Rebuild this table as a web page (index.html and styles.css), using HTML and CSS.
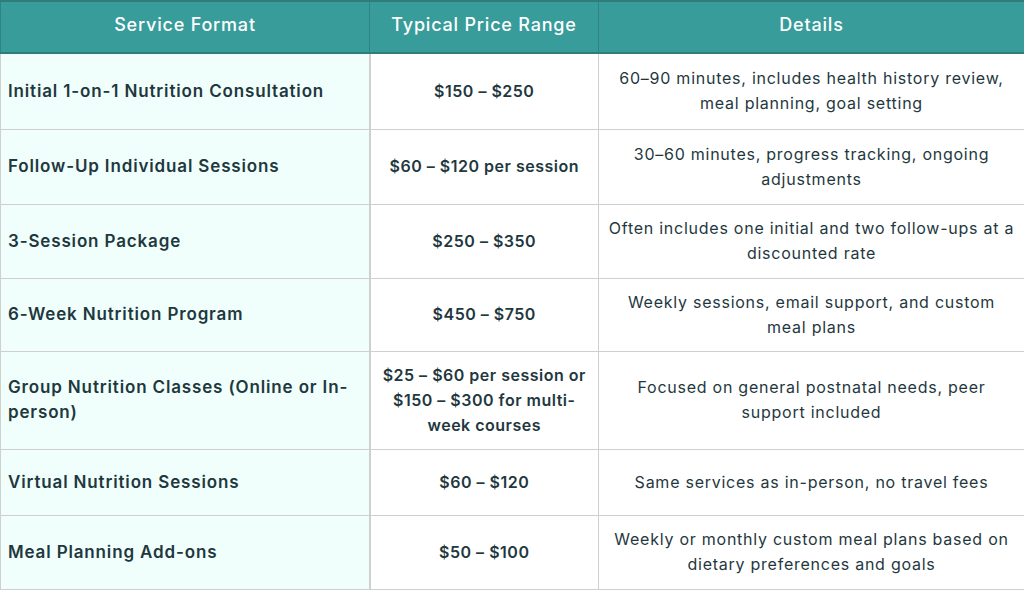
FILE: index.html
```html
<!DOCTYPE html>
<html>
<head>
<meta charset="utf-8">
<link rel="stylesheet" href="styles.css">
</head>
<body>
<table class="pricing">
  <colgroup>
    <col class="c1">
    <col class="c2">
    <col class="c3">
  </colgroup>
  <thead>
    <tr>
      <th>Service Format</th>
      <th>Typical Price Range</th>
      <th>Details</th>
    </tr>
  </thead>
  <tbody>
    <tr class="r1">
      <td class="name">Initial 1-on-1 Nutrition Consultation</td>
      <td class="price">$150 – $250</td>
      <td class="detail">60–90 minutes, includes health history review, meal planning, goal setting</td>
    </tr>
    <tr class="r2">
      <td class="name">Follow-Up Individual Sessions</td>
      <td class="price">$60 – $120 per session</td>
      <td class="detail">30–60 minutes, progress tracking, ongoing adjustments</td>
    </tr>
    <tr class="r3">
      <td class="name">3-Session Package</td>
      <td class="price">$250 – $350</td>
      <td class="detail">Often includes one initial and two follow-ups at a discounted rate</td>
    </tr>
    <tr class="r4">
      <td class="name">6-Week Nutrition Program</td>
      <td class="price">$450 – $750</td>
      <td class="detail">Weekly sessions, email support, and custom meal plans</td>
    </tr>
    <tr class="r5">
      <td class="name">Group Nutrition Classes (Online or In-person)</td>
      <td class="price">$25 – $60 per session or $150 – $300 for multi-week courses</td>
      <td class="detail">Focused on general postnatal needs, peer support included</td>
    </tr>
    <tr class="r6">
      <td class="name">Virtual Nutrition Sessions</td>
      <td class="price">$60 – $120</td>
      <td class="detail">Same services as in-person, no travel fees</td>
    </tr>
    <tr class="r7">
      <td class="name">Meal Planning Add-ons</td>
      <td class="price">$50 – $100</td>
      <td class="detail">Weekly or monthly custom meal plans based on dietary preferences and goals</td>
    </tr>
  </tbody>
</table>
</body>
</html>
```
FILE: styles.css
```css
html, body {
  margin: 0;
  padding: 0;
  background: #ffffff;
}
body {
  font-family: Inter, "Open Sans", sans-serif;
  color: #1f3840;
}
.pricing {
  width: 1024px;
  border-collapse: collapse;
  table-layout: fixed;
  font-size: 16px;
  line-height: 25px;
}
.c1 { width: 369px; }
.c2 { width: 229px; }
.c3 { width: 426px; }
.pricing th {
  background: #379c9a;
  color: #ffffff;
  font-weight: 500;
  font-size: 18px;
  letter-spacing: 0.8px;
  height: 44px;
  padding: 0 8px 6px;
  border: 1px solid #2e8583;
  border-top: 2px solid #2e7d7b;
  border-bottom: 2px solid #2e7d7b;
  text-align: center;
}
.pricing td {
  border: 1px solid #cfcfcf;
  vertical-align: middle;
}
.pricing td.name {
  background: #f0fffb;
  font-weight: 600;
  font-size: 17px;
  letter-spacing: 0.85px;
  text-align: left;
  padding: 0 14px 0 7px;
  border-right: 2px solid #d0d0d0;
}
.pricing td.price {
  font-weight: 600;
  letter-spacing: 0.5px;
  text-align: center;
  padding: 0 11px;
}
.pricing td.detail {
  text-align: center;
  letter-spacing: 0.75px;
  padding: 0 8px;
}
.r1 { height: 76px; }
.r2 { height: 75px; }
.r3 { height: 74px; }
.r4 { height: 73px; }
.r5 { height: 98px; }
.r6 { height: 66px; }
.r7 { height: 74px; }
```
